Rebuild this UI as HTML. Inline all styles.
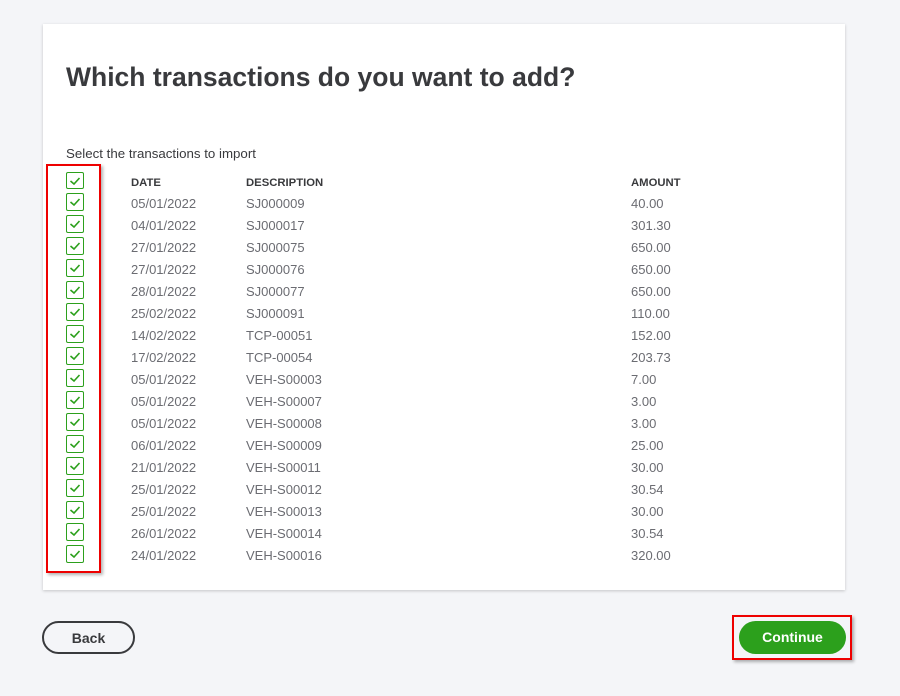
<!DOCTYPE html>
<html><head><style>
body{margin:0;width:900px;height:696px;background:#f4f5f8;font-family:"Liberation Sans",sans-serif;position:relative;overflow:hidden}
.card{position:absolute;left:43px;top:24px;width:802px;height:566px;background:#fff;box-shadow:0 1px 3px rgba(0,0,0,.2)}
h1{position:absolute;left:66px;top:62px;margin:0;font-size:26.5px;font-weight:bold;color:#393a3d}
.sub{position:absolute;left:66px;top:146px;font-size:13.3px;color:#393a3d}
.t{position:absolute;font-size:13px;color:#6b6c72}
.h{font-weight:bold;color:#393a3d;font-size:11.3px}
.cb{position:absolute;left:66px;width:16px;height:16px;border:1px solid #2ca01c;border-radius:2px;background:#fff}
.cb svg{position:absolute;left:2px;top:3px}
.red{position:absolute;border:2px solid #e00;box-shadow:2px 2px 3px rgba(0,0,0,.3)}
.btn{position:absolute;top:621px;height:33px;border-radius:17px;font-size:14px;font-weight:bold;text-align:center;line-height:30px;box-sizing:border-box}
</style></head><body>
<div class="card"></div>
<h1>Which transactions do you want to add?</h1>
<div class="sub">Select the transactions to import</div>
<div class="red" style="left:46px;top:164px;width:51px;height:405px"></div>
<div id="rows"></div>
<div class="t h" style="left:131px;top:177px">DATE</div>
<div class="t h" style="left:246px;top:177px">DESCRIPTION</div>
<div class="t h" style="left:631px;top:177px">AMOUNT</div>
<script>
var d=[["05/01/2022","SJ000009","40.00"],["04/01/2022","SJ000017","301.30"],["27/01/2022","SJ000075","650.00"],["27/01/2022","SJ000076","650.00"],["28/01/2022","SJ000077","650.00"],["25/02/2022","SJ000091","110.00"],["14/02/2022","TCP-00051","152.00"],["17/02/2022","TCP-00054","203.73"],["05/01/2022","VEH-S00003","7.00"],["05/01/2022","VEH-S00007","3.00"],["05/01/2022","VEH-S00008","3.00"],["06/01/2022","VEH-S00009","25.00"],["21/01/2022","VEH-S00011","30.00"],["25/01/2022","VEH-S00012","30.54"],["25/01/2022","VEH-S00013","30.00"],["26/01/2022","VEH-S00014","30.54"],["24/01/2022","VEH-S00016","320.00"]];
var h="";var ck='<svg width="12" height="10"><path d="M1.5 5 L5 8 L10.5 2" fill="none" stroke="#2ca01c" stroke-width="1.6"/></svg>';
h+='<div class="cb" style="top:172px;height:15px">'+ck+'</div>';
for(var i=0;i<d.length;i++){var y=196+22*i;
h+='<div class="cb" style="top:'+(y-3)+'px">'+ck+'</div>';
h+='<div class="t" style="left:131px;top:'+y+'px">'+d[i][0]+'</div><div class="t" style="left:246px;top:'+y+'px">'+d[i][1]+'</div><div class="t" style="left:631px;top:'+y+'px">'+d[i][2]+'</div>';}
document.getElementById("rows").innerHTML=h;
</script>
<div class="btn" style="left:42px;width:93px;border:2px solid #393a3d;color:#393a3d;background:#f4f5f8">Back</div>
<div class="red" style="left:732px;top:615px;width:116px;height:41px"></div>
<div class="btn" style="left:739px;width:107px;background:#2ca01c;color:#fff;line-height:33px">Continue</div>
</body></html>
